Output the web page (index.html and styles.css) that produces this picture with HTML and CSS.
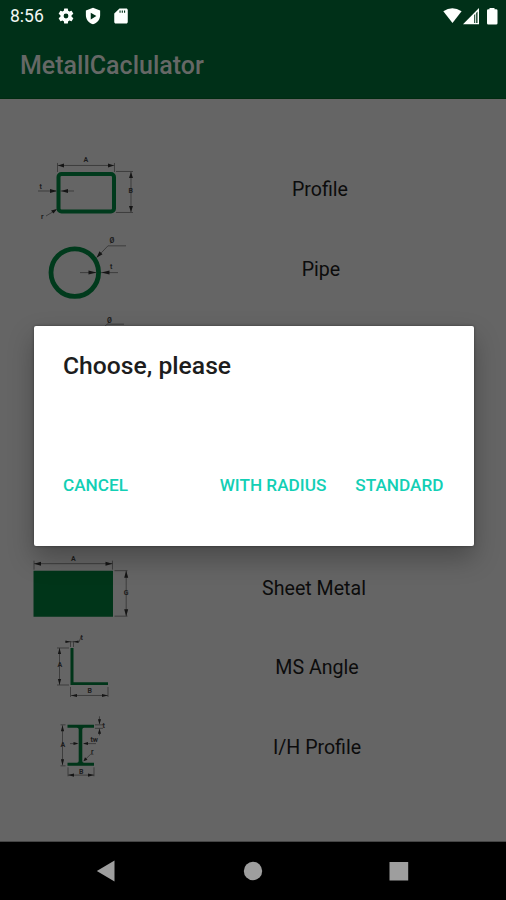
FILE: index.html
```html
<!DOCTYPE html>
<html lang="en">
<head>
<meta charset="utf-8">
<title>MetallCaclulator</title>
<link rel="stylesheet" href="styles.css">
</head>
<body>
<div class="screen">
  <header class="top">
    <div class="status">
      <span class="clock">8:56</span>
      <svg class="gear" width="18" height="18" viewBox="0 0 24 24"><path fill-rule="evenodd" d="M19.4 13a7.500 7.500 0 0 0 0-2l2.100-1.650a.5.5 0 0 0 .12-.64l-2-3.460a.5.5 0 0 0-.6-.22l-2.500 1a7.300 7.300 0 0 0-1.690-.98l-.38-2.650A.5.5 0 0 0 14 2h-4a.5.5 0 0 0-.49.420l-.38 2.650c-.61.250-1.170.590-1.690.980l-2.490-1a.5.5 0 0 0-.61.220l-2 3.460a.5.5 0 0 0 .12.640L4.570 11a8 8 0 0 0 0 2l-2.110 1.650a.5.5 0 0 0-.12.640l2 3.460c.12.220.39.300.61.220l2.490-1c.52.400 1.080.730 1.690.980l.38 2.650c.03.240.24.420.49.420h4c.25 0 .46-.18.490-.42l.38-2.650a7.300 7.300 0 0 0 1.690-.98l2.490 1c.23.080.49 0 .61-.22l2-3.460a.5.5 0 0 0-.12-.64zM12 15.200a3.200 3.200 0 1 1 0-6.400 3.200 3.200 0 0 1 0 6.400z"/></svg>
      <svg class="shield" width="18" height="18" viewBox="0 0 24 24"><path fill-rule="evenodd" d="M12 1 2.500 4.500V11c0 5.600 4 10.600 9.500 12 5.500-1.400 9.500-6.400 9.500-12V4.500zM9 7.500l7.500 4.500L9 16.500z"/></svg>
      <svg class="card" width="18" height="18" viewBox="0 0 24 24"><path fill-rule="evenodd" d="M19 2h-9L3 8.500V20c0 1.100.9 2 2 2h14c1.100 0 2-.9 2-2V4c0-1.100-.9-2-2-2zM10 4.500h1.500v3H10zM13 4.500h1.500v3H13zM16 4.500h1.500v3H16z"/></svg>
      <svg class="signals" width="56" height="18" viewBox="442 6 56 18"><path d="M443.300 10.300q9-6 18.300 0L452.500 22z"/><path fill-rule="evenodd" d="M463 23.300 479 7v16.300zM474.200 14v8h1v-9zM476.200 12v10h1.300V10.500z"/><path d="M489.500 7h5v1.200h1.700q1.300 0 1.300 1.300v12.700q0 1.300-1.300 1.300h-7.900q-1.300 0-1.300-1.300V9.500q0-1.300 1.300-1.300h1.200z"/></svg>
    </div>
    <h1 class="app-title">MetallCaclulator</h1>
  </header>

  <main class="list">
    <div class="row">
      <svg class="drawing" viewBox="0 149 160 79.670">
        <rect class="steel" x="58.500" y="174" width="55.500" height="37.500" rx="3" stroke-width="4"/>
        <path class="dim" d="M57.500 163v9M114.500 163v9M57.500 165.500h57M116 171.500h17M116 212.500h17M131 172v40M38 191h18M60 191h14M46 216l10-6"/>
        <path class="tip" d="m58 165.500 6-2v4zM114 165.500l-6-2v4zM131 172l-2 6h4zM131 212l-2-6h4zM57 191l-7-2v4zM61 191l7-2v4zM57 209l-6 1.500 2.500 3z"/>
        <text x="83.500" y="162.500">A</text><text x="128.500" y="193.500">B</text><text x="39.500" y="189">t</text><text x="41" y="219">r</text>
      </svg>
      <span class="label label-profile">Profile</span>
    </div>
    <div class="row">
      <svg class="drawing" viewBox="0 228.670 160 79.670">
        <circle class="steel" cx="74.800" cy="272.300" r="23.800" stroke-width="4.800"/>
        <path class="dim" d="M97 257l11-11.500h18M80 272.300h16M101 272.300h17"/>
        <path class="tip" d="m96.500 257.500 3-6.500 3 3zM96.500 272.300l-8-2v4zM101.500 272.300l8-2v4z"/>
        <text x="109.500" y="243">Ø</text><text x="110" y="269">t</text>
      </svg>
      <span class="label label-pipe">Pipe</span>
    </div>
    <div class="row">
      <svg class="drawing" viewBox="0 308.330 160 79.670">
        <path class="dim" d="m97 335 10-10.500h17"/>
        <text x="107" y="323">Ø</text>
      </svg>
    </div>
    <div class="row"></div>
    <div class="row"></div>
    <div class="row">
      <svg class="drawing" viewBox="0 547.330 160 79.670">
        <path class="solid" d="M33.500 571h79.500v46H33.500z"/>
        <path class="dim" d="M34 561v9M112.500 561v9M34 564h78.500M114.500 571h13M114.500 616.500h13M126.200 571v45.500"/>
        <path class="tip" d="m34 564 7-2v4zM112.500 564l-7-2v4zM126.200 571l-2 7h4zM126.200 616.500l-2-7h4z"/>
        <text x="71" y="561">A</text><text x="123.800" y="595">G</text>
      </svg>
      <span class="label label-sheet">Sheet Metal</span>
    </div>
    <div class="row">
      <svg class="drawing" viewBox="0 627 160 79.670">
        <path class="solid" d="M70.500 648h3v34.300h34.500v2.700H70.500z"/>
        <path class="dim" d="M57 648h12M57 685h12M59.500 648v37M70.500 687v10M108 687v10M71 695.500h37M65 641.800h14M70.500 641v6M73.500 641v6M79 642l2-5"/>
        <path class="tip" d="m59.500 648-1.600 6h3.200zM59.500 685l-1.600-6h3.200zM71 695.500l6-1.600v3.200zM108 695.500l-6-1.600v3.200zM70.500 641.800l-5-1.300v2.600zM73.500 641.800l5-1.300v2.600z"/>
        <text x="57.500" y="667">A</text><text x="87.500" y="693.500">B</text><text x="80.500" y="640">t</text>
      </svg>
      <span class="label label-angle">MS Angle</span>
    </div>
    <div class="row">
      <svg class="drawing" viewBox="0 706.670 160 79.670">
        <path class="solid" d="M67.500 724.500h26.500v3H84q-1.700 0-1.700 1.700v31.600q0 1.700 1.700 1.700h10v3H67.500v-3H77q1.700 0 1.700-1.700v-31.600q0-1.700-1.700-1.700h-9.500z"/>
        <path class="dim" d="M60.500 724.500h5M60.500 765.500h5M62.500 725v40M68 767v9M94 767v9M68 774.800h26M70 743.300h7M84 743.300h12M95 724.500h8M95 728h8M99.500 716v8M99.500 728v7M84.500 760l6-6h3"/>
        <path class="tip" d="m62.500 725-1.600 6h3.200zM62.500 765l-1.600-6h3.200zM68 774.800l6-1.600v3.200zM94 774.800l-6-1.600v3.200zM78.500 743.300l-5-1.500v3zM83 743.300l5-1.500v3zM99.500 724l-1.600-5h3.200zM99.500 728.500l-1.600 5h3.200zM83.500 761l1.500-4 2.500 2.500z"/>
        <text x="60.500" y="747">A</text><text x="79" y="774">B</text><text x="90.500" y="742">tw</text><text x="102.500" y="728">t</text><text x="91" y="754">r</text>
      </svg>
      <span class="label label-beam">I/H Profile</span>
    </div>
  </main>

  <nav class="navbar">
    <svg width="20" height="22" viewBox="0 0 20 22"><path d="M.8 11 18.500.5v21z"/></svg>
    <svg width="20" height="22" viewBox="0 0 20 22"><circle cx="10" cy="11" r="9.200"/></svg>
    <svg width="20" height="22" viewBox="0 0 20 22"><path d="M.5 2h18.700v18.500H.5z"/></svg>
  </nav>

  <section class="dialog" role="dialog">
    <h2 class="dialog-title">Choose, please</h2>
    <div class="actions">
      <button class="action">CANCEL</button>
      <button class="action action-radius">WITH RADIUS</button>
      <button class="action">STANDARD</button>
    </div>
  </section>
</div>
</body>
</html>
```
FILE: styles.css
```css
* { box-sizing: border-box; }
body { margin: 0; background: #000; font-family: Roboto, sans-serif; }
.screen {
  position: relative;
  display: flex;
  flex-direction: column;
  width: 506px;
  height: 900px;
  overflow: hidden;
}
.top { height: 99px; background: #003018; border-bottom: 1px solid #002b10; }
.status { display: flex; align-items: center; height: 32px; padding: 0 8px 0 10px; }
.status svg { fill: #fdfffd; flex: none; }
.clock { width: 47px; font-size: 17.500px; font-weight: 400; color: #f2f7f3; }
.shield { margin-left: 9px; }
.card { margin-left: 10px; }
.status .signals { margin-left: auto; }
.app-title {
  margin: 0;
  padding: 15px 0 0 20px;
  font-size: 25px;
  line-height: 38px;
  font-weight: 500;
  color: #666866;
}
.list { height: 743px; padding-top: 50px; background: #656565; border-bottom: 1px solid #454545; }
.row { display: flex; align-items: center; height: 79.670px; }
.drawing { flex: none; width: 160px; height: 79.670px; }
.drawing text { font-size: 7px; font-weight: 700; fill: #1c1c1c; }
.steel { fill: none; stroke: #003a1c; }
.solid { fill: #003519; }
.dim { fill: none; stroke: #333; stroke-width: .8; }
.tip { fill: #151515; }
.label { width: 320px; padding-top: 2px; text-align: center; font-size: 19.600px; color: #0c0c0c; }
.label-pipe { margin-left: 1px; }
.label-sheet { margin-left: -6px; }
.label-angle, .label-beam { margin-left: -3px; }
.navbar {
  display: flex;
  align-items: center;
  justify-content: space-between;
  height: 58px;
  padding: 0 97px 0 96px;
  background: #000;
}
.navbar svg { fill: #9e9e9e; }
.dialog {
  position: absolute;
  left: 33.500px;
  top: 325.500px;
  width: 440px;
  height: 220px;
  padding: 22.500px 30px 0 29.500px;
  background: #fff;
  border-radius: 2px;
  box-shadow: 0 12px 26px rgba(0, 0, 0, .28), 0 0 3px rgba(0, 0, 0, .4);
}
.dialog-title { margin: 0; font-size: 24.700px; line-height: 36px; font-weight: 500; color: #1d1d1d; }
.actions { display: flex; margin-top: 83px; }
.action {
  padding: 0;
  border: 0;
  background: none;
  font: 500 17.200px/36px Roboto, sans-serif;
  color: #13cfb5;
}
.action-radius { margin: 0 29px 0 auto; }
```
